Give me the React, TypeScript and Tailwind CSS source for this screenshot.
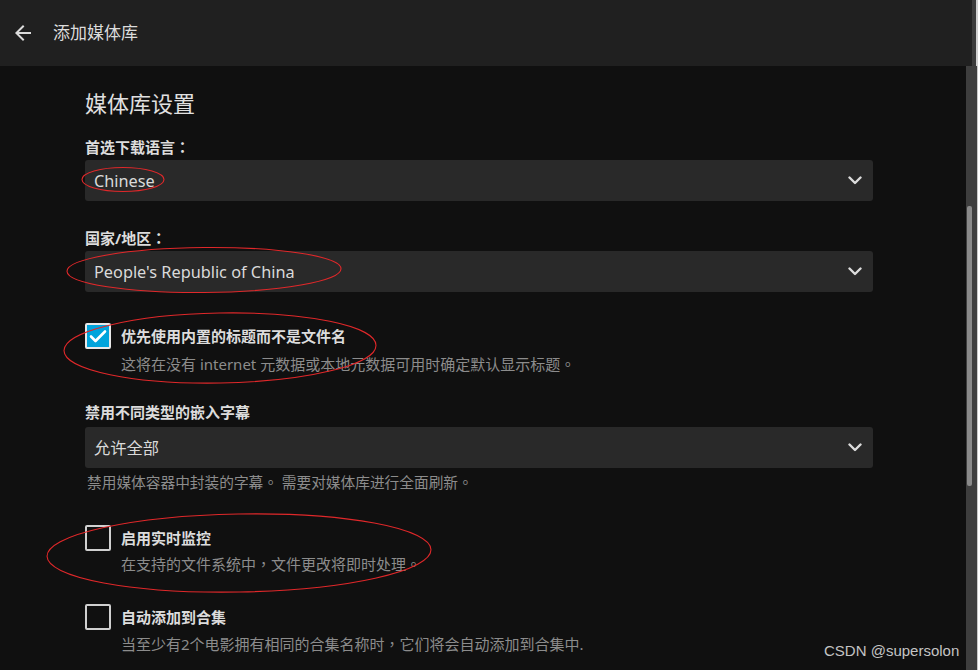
import React from "react";

const font = { fontFamily: '"Noto Sans", "Noto Sans CJK SC", sans-serif' };

function T({ text }: { text: string }) {
  const parts = text.split(/([：。，])/);
  return (
    <>
      {parts.map((p, i) =>
        /^[：。，]$/.test(p) ? (
          <span key={i} style={{ fontFamily: '"Noto Sans CJK TC", sans-serif' }}>
            {p}
          </span>
        ) : (
          <React.Fragment key={i}>{p}</React.Fragment>
        )
      )}
    </>
  );
}

function Chevron() {
  return (
    <svg width="14" height="9" viewBox="0 0 14 9" className="shrink-0">
      <path d="M1.5 1.5 L7 7 L12.5 1.5" fill="none" stroke="#dcdcdc" strokeWidth="2.4" strokeLinecap="round" strokeLinejoin="round" />
    </svg>
  );
}

function Select({ value }: { value: string }) {
  return (
    <div className="flex h-[41px] w-[788px] items-center justify-between rounded-[3px] bg-[#292929] pl-[9px] pr-[11px]">
      <span className="pt-[2px] text-[16.3px] text-[#dadada]">{value}</span>
      <Chevron />
    </div>
  );
}

function Checkbox({ checked }: { checked?: boolean }) {
  if (checked) {
    return (
      <div className="flex h-[26px] w-[26px] shrink-0 items-center justify-center rounded-[2px] border-2 border-[#e8e8e8] bg-[#00a4dc]">
        <svg width="18" height="14" viewBox="0 0 18 14">
          <path d="M2 7.5 L6.5 12 L16 2.5" fill="none" stroke="#ffffff" strokeWidth="2.6" strokeLinecap="round" strokeLinejoin="round" />
        </svg>
      </div>
    );
  }
  return <div className="h-[26px] w-[26px] shrink-0 rounded-[2px] border-2 border-[#d0d0d0]" />;
}

function CheckRow({ checked, label, desc, descGap }: { checked?: boolean; label: string; desc: string; descGap: string }) {
  return (
    <div className="flex gap-[10px]">
      <Checkbox checked={checked} />
      <div className="flex flex-col pt-[3px]">
        <span className="text-[15px] font-bold leading-[20px] text-[#dcdcdc]">
          <T text={label} />
        </span>
        <span className={`${descGap} text-[15px] leading-[20px] text-[#8c8c8c]`}>
          <T text={desc} />
        </span>
      </div>
    </div>
  );
}

export default function App() {
  return (
    <div className="relative flex h-[670px] w-[978px] flex-col overflow-hidden bg-[#101010]" style={font}>
      <div className="flex h-[66px] shrink-0">
        <div className="flex flex-1 items-center bg-[#202020] pl-[11px]">
          <svg width="24" height="24" viewBox="0 0 24 24">
            <path d="M20 11H7.83l5.59-5.59L12 4l-8 8 8 8 1.41-1.41L7.83 13H20v-2z" fill="#dcdcdc" />
          </svg>
          <span className="ml-[18px] text-[17px] text-[#dcdcdc]">添加媒体库</span>
        </div>
        <div className="w-[4px] bg-[#3a3a3a]" />
        <div className="w-[2px] bg-[#cfcfcf]" />
      </div>
      <div className="flex flex-1">
        <div className="flex flex-1 flex-col pl-[85px] pt-[22px]">
          <h1 className="text-[22px] leading-[30px] text-[#e0e0e0]">媒体库设置</h1>
          <span className="mt-[19px] text-[15px] font-bold leading-[20px] text-[#dcdcdc]">
            <T text="首选下载语言：" />
          </span>
          <div className="mt-[3px]">
            <Select value="Chinese" />
          </div>
          <span className="mt-[27px] text-[15px] font-bold leading-[20px] text-[#dcdcdc]">
            <T text="国家/地区：" />
          </span>
          <div className="mt-[3px]">
            <Select value="People's Republic of China" />
          </div>
          <div className="mt-[31px]">
            <CheckRow
              checked
              label="优先使用内置的标题而不是文件名"
              desc="这将在没有 internet 元数据或本地元数据可用时确定默认显示标题。"
              descGap="mt-[8px]"
            />
          </div>
          <span className="mt-[28px] text-[15px] font-bold leading-[20px] text-[#dcdcdc]">禁用不同类型的嵌入字幕</span>
          <div className="mt-[5px]">
            <Select value="允许全部" />
          </div>
          <span className="ml-[2px] mt-[4px] text-[14.7px] leading-[20px] text-[#8c8c8c]">
            <T text="禁用媒体容器中封装的字幕。 需要对媒体库进行全面刷新。" />
          </span>
          <div className="mt-[33px]">
            <CheckRow label="启用实时监控" desc="在支持的文件系统中，文件更改将即时处理。" descGap="mt-[6px]" />
          </div>
          <div className="mt-[30px]">
            <CheckRow
              label="自动添加到合集"
              desc="当至少有2个电影拥有相同的合集名称时，它们将会自动添加到合集中."
              descGap="mt-[7px]"
            />
          </div>
        </div>
        <div className="relative w-[11px] bg-[#3e3e3e]">
          <div className="absolute left-[1px] top-[140px] h-[280px] w-[5px] rounded-[2px] bg-[#8a8a8a]" />
        </div>
        <div className="w-[1px] bg-[#c8c8c8]" />
      </div>

      <svg className="pointer-events-none absolute left-0 top-0" width="978" height="670">
        <g fill="none" stroke="#e0282a" strokeWidth="1.1">
          <ellipse cx="123" cy="179.5" rx="41" ry="12" />
          <ellipse cx="204" cy="270" rx="137" ry="22.5" transform="rotate(-0.5 204 270)" />
          <ellipse cx="220" cy="348" rx="156" ry="35" transform="rotate(-1 220 348)" />
          <ellipse cx="239" cy="553" rx="192" ry="39" transform="rotate(-1 239 553)" />
        </g>
      </svg>

      <span
        className="absolute left-[824px] top-[641px] text-[15px] leading-[20px] text-[#c4c4c4]"
        style={{ fontFamily: '"Liberation Sans", Arial, sans-serif' }}
      >
        CSDN @supersolon
      </span>
    </div>
  );
}
